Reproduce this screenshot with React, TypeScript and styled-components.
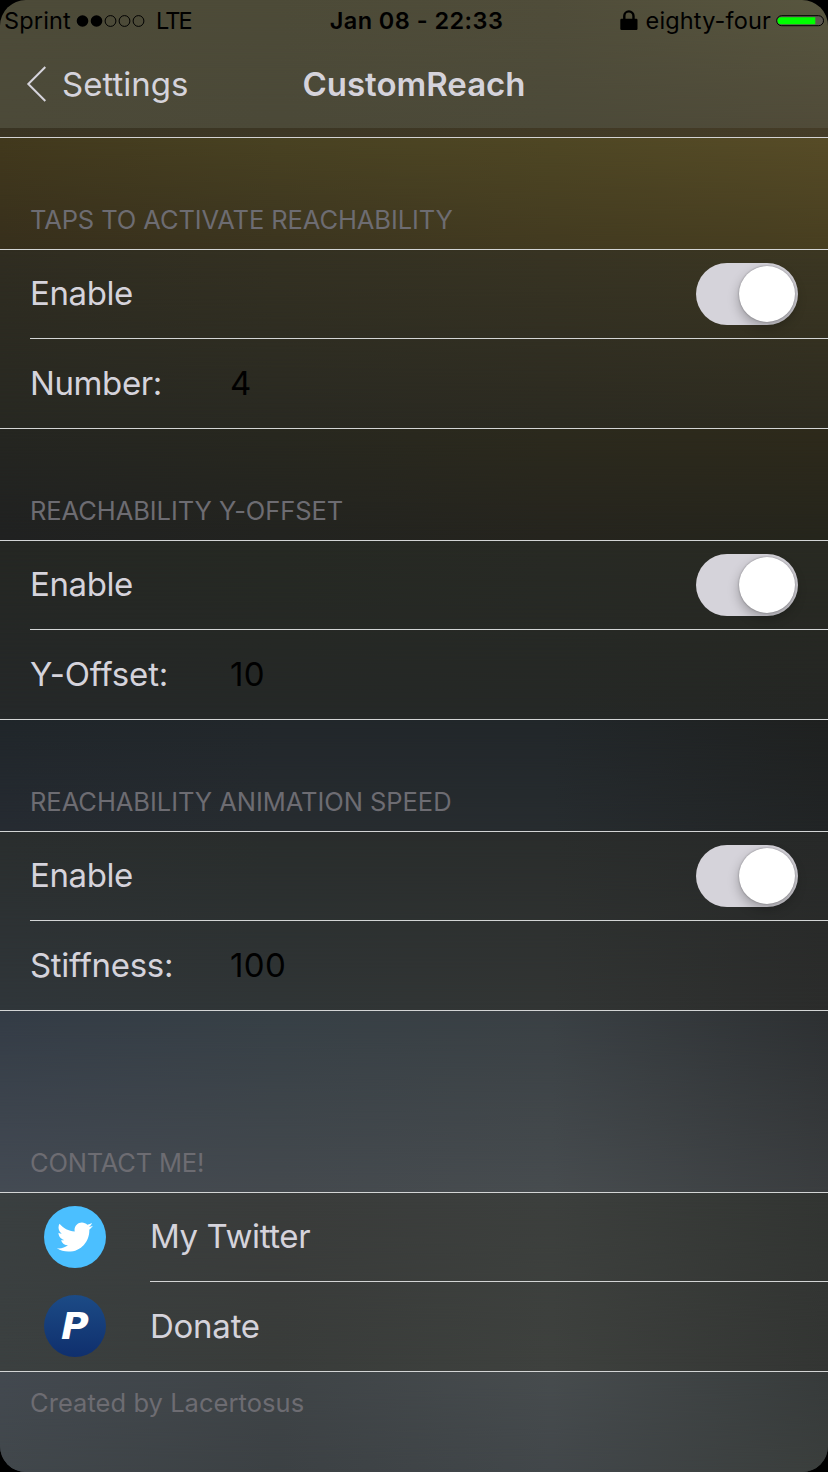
import React from "react";
import styled, { createGlobalStyle } from "styled-components";
import { FaTwitter } from "react-icons/fa";

const GlobalStyle = createGlobalStyle`
  * { box-sizing: border-box; }
  body { margin: 0; background: #000; }
`;

type Tint = string[];

const Screen = styled.main`
  width: 828px;
  height: 1472px;
  display: flex;
  flex-direction: column;
  overflow: hidden;
  border-radius: 26px;
  font-family: Inter, "Liberation Sans", sans-serif;
  font-size: 33px;
  color: #d5d3db;
  white-space: nowrap;
`;

/* A translucent-looking surface: one horizontal wash that fades into another. */
const Surface = styled.div<{ $top: Tint; $bottom: Tint }>`
  position: relative;
  isolation: isolate;
  background: linear-gradient(90deg, ${(p) => p.$top.join(", ")});

  &::before {
    content: "";
    position: absolute;
    inset: 0;
    z-index: -1;
    background: linear-gradient(90deg, ${(p) => p.$bottom.join(", ")});
    mask-image: linear-gradient(transparent, #000);
  }
`;

const Header = styled(Surface)`
  height: 128px;
  display: flex;
  flex-direction: column;
`;

const StatusBar = styled.div`
  height: 40px;
  padding: 1px 4px 0 4px;
  display: grid;
  grid-template-columns: 1fr auto 1fr;
  align-items: center;
  font-size: 23.5px;
  line-height: 40px;
  color: #000;
`;

const StatusGroup = styled.div<{ $end?: boolean }>`
  display: flex;
  align-items: center;
  justify-content: ${(p) => (p.$end ? "flex-end" : "flex-start")};
`;

const Carrier = styled.span`
  width: 72px;
  letter-spacing: 0.15px;
`;

const Network = styled.span`
  margin-left: 11px;
  letter-spacing: -1.8px;
`;

const Clock = styled.span`
  padding-left: 5px;
  font-weight: 600;
  letter-spacing: 0.45px;
`;

const DeviceName = styled.span`
  margin: 0 5px 0 8px;
  letter-spacing: 0.15px;
`;

const NavBar = styled.nav`
  height: 88px;
  padding: 0 26px;
  display: grid;
  grid-template-columns: 1fr auto 1fr;
  align-items: center;
`;

const Back = styled.a`
  display: flex;
  align-items: center;
  gap: 14px;
  letter-spacing: 0;
`;

const Title = styled.h1`
  margin: 0;
  font-size: 33px;
  font-weight: 600;
  letter-spacing: 0;
`;

const PreviousCell = styled(Surface)`
  height: 10px;
  border-bottom: 1px solid #d3d2d3;
`;

const SectionHeader = styled(Surface)<{ $height?: number }>`
  height: ${(p) => p.$height ?? 111}px;
  padding: 0 0 13px 30px;
  display: flex;
  align-items: flex-end;
`;

const SectionLabel = styled.h2<{ $spacing: number }>`
  margin: 0;
  font-size: 25.5px;
  line-height: 32px;
  font-weight: 400;
  letter-spacing: ${(p) => p.$spacing}px;
  color: #6d6c72;
`;

const Group = styled(Surface)`
  height: 180px;
  border-top: 1px solid #d3d5d5;
  border-bottom: 1px solid #d3d5d5;
`;

const Row = styled.div`
  height: 88px;
  margin-left: 30px;
  padding-right: 30px;
  display: flex;
  align-items: center;

  & + & {
    border-top: 1px solid #d3d5d5;
    height: 90px;
  }
`;

const LinkRow = styled.div`
  height: 89px;
  display: flex;
`;

const LinkIcon = styled.div`
  width: 150px;
  padding-bottom: 2px;
  display: flex;
  align-items: center;
  justify-content: center;
`;

const LinkBody = styled.div<{ $divider?: boolean }>`
  flex: 1;
  display: flex;
  align-items: center;
  border-bottom: ${(p) => (p.$divider ? "1px solid #d3d5d5" : "none")};
`;

const Label = styled.span<{ $spacing: number; $width?: number }>`
  width: ${(p) => (p.$width ? `${p.$width}px` : "auto")};
  padding-bottom: 2px;
  letter-spacing: ${(p) => p.$spacing}px;
`;

const Value = styled.span`
  padding-bottom: 2px;
  letter-spacing: 0.4px;
  color: #000;
`;

const Toggle = styled.span`
  width: 102px;
  height: 62px;
  margin-left: auto;
  padding: 3px;
  display: flex;
  justify-content: flex-end;
  border-radius: 31px;
  background: #d5d3da;
`;

const Knob = styled.span`
  width: 56px;
  height: 56px;
  border-radius: 50%;
  background: #fff;
  box-shadow: 0 0 2px rgba(0, 0, 0, 0.35), 0 5px 12px rgba(0, 0, 0, 0.28);
`;

const Badge = styled.span<{ $fill: string }>`
  width: 62px;
  height: 62px;
  display: flex;
  align-items: center;
  justify-content: center;
  border-radius: 50%;
  background: ${(p) => p.$fill};
  color: #fff;
`;

const Monogram = styled.span`
  font: italic 700 38px/62px "DejaVu Sans", sans-serif;
`;

const Footer = styled(Surface)`
  flex: 1;
  padding: 15px 0 0 30px;
`;

const Credit = styled.p`
  margin: 0;
  font-size: 25.5px;
  line-height: 32px;
  letter-spacing: 0.05px;
  color: #6d6c72;
`;

const SignalDots = () => (
  <svg width="69" height="13" viewBox="0 0 69 13">
    {[0, 1, 2, 3, 4].map((i) => (
      <circle
        key={i}
        cx={6.5 + i * 14}
        cy="6"
        r={i < 2 ? 5.8 : 5.4}
        fill={i < 2 ? "#000" : "none"}
        stroke={i < 2 ? "none" : "#000"}
        strokeWidth="1"
      />
    ))}
  </svg>
);

const Lock = () => (
  <svg width="18" height="22" viewBox="0 0 18 22">
    <path d="M4.3 10V6a4.6 4.6 0 0 1 9.2 0v4" fill="none" stroke="#000" strokeWidth="2.4" />
    <rect x="0.3" y="8.7" width="17.2" height="11.3" rx="1.2" />
  </svg>
);

const Battery = () => (
  <svg width="48" height="12" viewBox="0 0 48 12">
    <rect x="0.7" y="0.7" width="46.8" height="10" rx="5" fill="#5d5850" stroke="#000" strokeWidth="1" />
    <path d="M5 2.2H39.3V9.2H5A3.5 3.5 0 0 1 5 2.2Z" fill="#0f0" />
  </svg>
);

const Chevron = () => (
  <svg width="22" height="38" viewBox="0 0 22 38">
    <path d="M19.3 2 2.3 19l17 17" fill="none" stroke="#d5d3db" strokeWidth="2" />
  </svg>
);

interface Section {
  title: string;
  titleSpacing: number;
  field: string;
  fieldSpacing: number;
  value: string;
  head: [Tint, Tint];
  body: [Tint, Tint];
}

const sections: Section[] = [
  {
    title: "TAPS TO ACTIVATE REACHABILITY",
    titleSpacing: -0.1,
    field: "Number:",
    fieldSpacing: -0.4,
    value: "4",
    head: [
      ["#42391d", "#494222", "#4f4724", "#574c27"],
      ["#372f1c", "#3b341f", "#423a20", "#473e20"],
    ],
    body: [
      ["#302d21", "#343122", "#383423", "#3c3722"],
      ["#272822", "#292922", "#2b2a21", "#2d2b20"],
    ],
  },
  {
    title: "REACHABILITY Y-OFFSET",
    titleSpacing: -0.07,
    field: "Y-Offset:",
    fieldSpacing: -0.15,
    value: "10",
    head: [
      ["#252621", "#28281f", "#2c2a1d", "#2e2a1b"],
      ["#202121", "#222320", "#25241e", "#25251c"],
    ],
    body: [
      ["#252723", "#262923", "#282a24", "#292a22"],
      ["#252829", "#252827", "#252826", "#242624"],
    ],
  },
  {
    title: "REACHABILITY ANIMATION SPEED",
    titleSpacing: -0.05,
    field: "Stiffness:",
    fieldSpacing: -0.3,
    value: "100",
    head: [
      ["#20262a", "#22272b", "#22272a", "#1f2120"],
      ["#262b32", "#272c30", "#272c2f", "#212425"],
    ],
    body: [
      ["#2a2e2e", "#292d2c", "#2a2d2c", "#272928"],
      ["#30363a", "#303536", "#323534", "#2b2c2b"],
    ],
  },
];

const washes: Record<"header" | "previous" | "contactHead" | "contactBody" | "footer", [Tint, Tint]> = {
  header: [
    ["#4d4b39", "#4d4b38", "#504d3a", "#58563f"],
    ["#4c4a39", "#4b4938", "#4c4a39", "#504b39"],
  ],
  previous: [
    ["#3a3423", "#3d3725", "#413a26", "#453d28"],
    ["#3a3423", "#3d3725", "#413a26", "#453d28"],
  ],
  contactHead: [
    ["#343c46", "#374046", "#3a4044", "#2d3032"],
    ["#444b54", "#44494e", "#474c4f", "#3a3d3f"],
  ],
  contactBody: [
    ["#3a3f40", "#3a3c3b", "#3c3f3d", "#323532"],
    ["#3b4040", "#393c3a", "#3e413e", "#333533"],
  ],
  footer: [
    ["#434950", "#3f4447", "#474c4e", "#373b3b"],
    ["#41474b", "#3c4144", "#42474a", "#3a3e3c"],
  ],
};

export default function App() {
  return (
    <>
      <GlobalStyle />
      <Screen>
        <Header $top={washes.header[0]} $bottom={washes.header[1]}>
          <StatusBar>
            <StatusGroup>
              <Carrier>Sprint</Carrier>
              <SignalDots />
              <Network>LTE</Network>
            </StatusGroup>
            <Clock>Jan 08 - 22:33</Clock>
            <StatusGroup $end>
              <Lock />
              <DeviceName>eighty-four</DeviceName>
              <Battery />
            </StatusGroup>
          </StatusBar>
          <NavBar>
            <Back>
              <Chevron />
              Settings
            </Back>
            <Title>CustomReach</Title>
          </NavBar>
        </Header>
        <PreviousCell $top={washes.previous[0]} $bottom={washes.previous[1]} />

        {sections.map((s) => (
          <React.Fragment key={s.title}>
            <SectionHeader $top={s.head[0]} $bottom={s.head[1]}>
              <SectionLabel $spacing={s.titleSpacing}>{s.title}</SectionLabel>
            </SectionHeader>
            <Group $top={s.body[0]} $bottom={s.body[1]}>
              <Row>
                <Label $spacing={-0.4}>Enable</Label>
                <Toggle role="switch">
                  <Knob />
                </Toggle>
              </Row>
              <Row>
                <Label $spacing={s.fieldSpacing} $width={200}>
                  {s.field}
                </Label>
                <Value>{s.value}</Value>
              </Row>
            </Group>
          </React.Fragment>
        ))}

        <SectionHeader $height={181} $top={washes.contactHead[0]} $bottom={washes.contactHead[1]}>
          <SectionLabel $spacing={-0.2}>CONTACT ME!</SectionLabel>
        </SectionHeader>
        <Group $top={washes.contactBody[0]} $bottom={washes.contactBody[1]}>
          <LinkRow>
            <LinkIcon>
              <Badge $fill="#4bbfff">
                <FaTwitter size={36} />
              </Badge>
            </LinkIcon>
            <LinkBody $divider>
              <Label $spacing={-0.4}>My Twitter</Label>
            </LinkBody>
          </LinkRow>
          <LinkRow>
            <LinkIcon>
              <Badge $fill="linear-gradient(#1c4b86, #0f2f6d)">
                <Monogram>P</Monogram>
              </Badge>
            </LinkIcon>
            <LinkBody>
              <Label $spacing={-0.25}>Donate</Label>
            </LinkBody>
          </LinkRow>
        </Group>
        <Footer $top={washes.footer[0]} $bottom={washes.footer[1]}>
          <Credit>Created by Lacertosus</Credit>
        </Footer>
      </Screen>
    </>
  );
}
